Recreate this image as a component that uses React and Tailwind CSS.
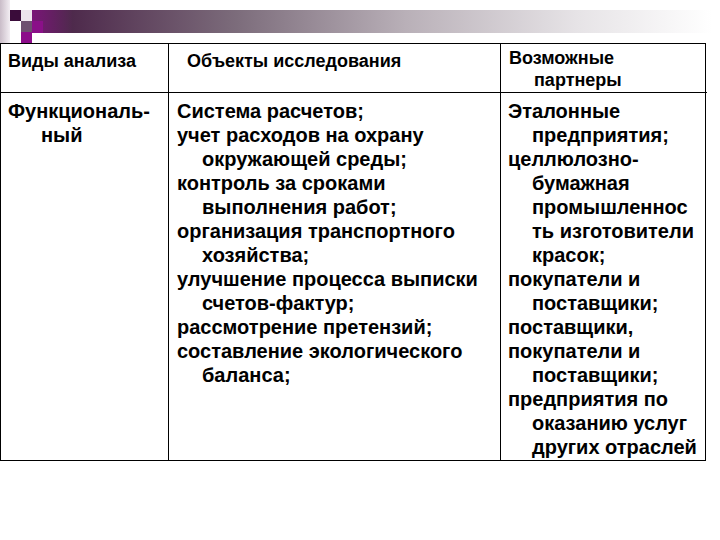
// Slide: functional analysis table
const col1 = [
  { t: 'Функциональ-' },
  { t: 'ный', indent: true },
];

const col2 = [
  { t: 'Система расчетов;' },
  { t: 'учет расходов на охрану' },
  { t: 'окружающей среды;', indent: true },
  { t: 'контроль за сроками' },
  { t: 'выполнения работ;', indent: true },
  { t: 'организация транспортного' },
  { t: 'хозяйства;', indent: true },
  { t: 'улучшение процесса выписки' },
  { t: 'счетов-фактур;', indent: true },
  { t: 'рассмотрение претензий;' },
  { t: 'составление экологического' },
  { t: 'баланса;', indent: true },
];

const col3 = [
  { t: 'Эталонные' },
  { t: 'предприятия;', indent: true },
  { t: 'целлюлозно-' },
  { t: 'бумажная', indent: true },
  { t: 'промышленнос', indent: true },
  { t: 'ть изготовители', indent: true },
  { t: 'красок;', indent: true },
  { t: 'покупатели и' },
  { t: 'поставщики;', indent: true },
  { t: 'поставщики,' },
  { t: 'покупатели и' },
  { t: 'поставщики;', indent: true },
  { t: 'предприятия по' },
  { t: 'оказанию услуг', indent: true },
  { t: 'других отраслей', indent: true },
];

function Lines({ items, indent = 'pl-[25px]' }) {
  return (
    <div className="leading-[24px]">
      {items.map((l, i) => (
        <div key={i} className={`whitespace-nowrap ${l.indent ? indent : ''}`}>
          {l.t}
        </div>
      ))}
    </div>
  );
}

function Header() {
  return (
    <svg width="720" height="43" className="block">
      <defs>
        <linearGradient id="bar" x1="0" x2="1" y1="0" y2="0">
          <stop offset="0" stopColor="#7a1578" />
          <stop offset="0.06" stopColor="#4e2a4c" />
          <stop offset="0.3" stopColor="#7c6c7b" />
          <stop offset="0.55" stopColor="#b9b0b8" />
          <stop offset="0.8" stopColor="#e6e3e6" />
          <stop offset="1" stopColor="#ffffff" />
        </linearGradient>
        <linearGradient id="side" x1="0" x2="1" y1="0" y2="0">
          <stop offset="0" stopColor="#c9bcc8" />
          <stop offset="1" stopColor="#f3eef3" />
        </linearGradient>
      </defs>
      <rect x="0" y="0" width="10" height="43" fill="url(#side)" />
      <rect x="32" y="10" width="680" height="23" fill="url(#bar)" />
      <rect x="10" y="10" width="11" height="11" fill="#3a0c3a" />
      <rect x="21" y="10" width="11" height="11" fill="#ece4ec" />
      <rect x="21" y="21" width="11" height="11" fill="#6e5070" />
      <rect x="32" y="21" width="11" height="12" fill="#8a1088" />
      <rect x="21" y="32" width="11" height="11" fill="#8c0c8a" />
    </svg>
  );
}

export default function App() {
  return (
    <div
      className="w-[720px] h-[540px] bg-white text-black overflow-hidden"
      style={{ fontFamily: '"Liberation Sans", Arial, sans-serif' }}
    >
      <Header />
      <div className="grid grid-cols-[168px_332px_206px] w-[706px] border border-black font-bold">
        <div className="h-[49px] border-r border-b border-black pl-[7px] pt-[6px] text-[18px] leading-[22px]">
          Виды анализа
        </div>
        <div className="h-[49px] border-r border-b border-black pl-[18px] pt-[6px] text-[18px] leading-[22px]">
          Объекты исследования
        </div>
        <div className="h-[49px] border-b border-black pl-[8px] pt-[3px] text-[18px] leading-[22px]">
          <div>Возможные</div>
          <div className="pl-[25px]">партнеры</div>
        </div>

        <div className="h-[367px] border-r border-black pl-[7px] pt-[6px] text-[20px]">
          <Lines items={col1} indent="pl-[33px]" />
        </div>
        <div className="h-[367px] border-r border-black pl-[8px] pt-[6px] text-[20px]">
          <Lines items={col2} />
        </div>
        <div className="h-[367px] pl-[7px] pt-[6px] text-[20px]">
          <Lines items={col3} indent="pl-[24px]" />
        </div>
      </div>
    </div>
  );
}
